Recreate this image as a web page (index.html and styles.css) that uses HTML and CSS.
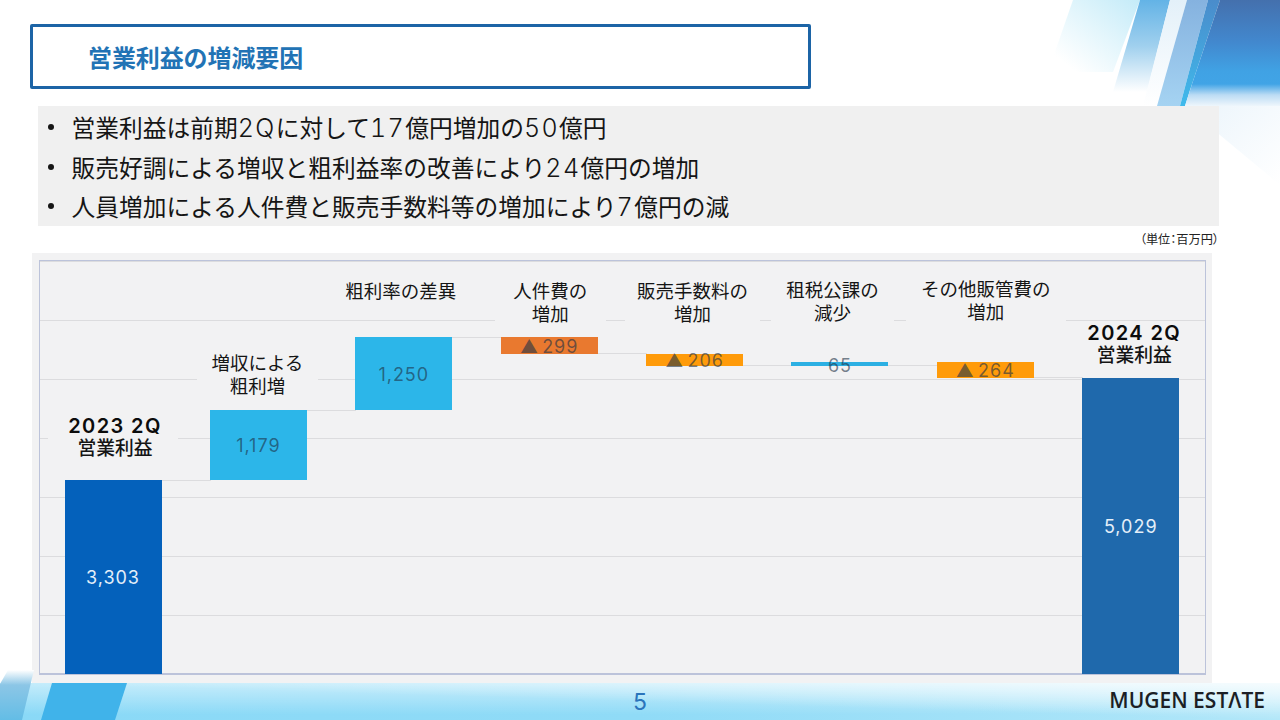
FILE: index.html
```html
<!DOCTYPE html>
<html lang="ja">
<head>
<meta charset="utf-8">
<title>営業利益の増減要因</title>
<link rel="stylesheet" href="styles.css">
</head>
<body>
<div class="slide">
  <svg class="decor-top" viewBox="0 0 260 200" width="260" height="200" aria-hidden="true">
    <defs>
      <linearGradient id="fadeLight" x1="1" y1="0" x2="0" y2="1">
        <stop offset="0" stop-color="#c4ebf8"/><stop offset="0.45" stop-color="#e4f6fc"/><stop offset="0.85" stop-color="#ffffff"/>
      </linearGradient>
      <linearGradient id="fadeBlue" x1="0" y1="0" x2="0" y2="1">
        <stop offset="0" stop-color="#63b3e6"/><stop offset="0.5" stop-color="#a0d0ee"/><stop offset="1" stop-color="#ffffff"/>
      </linearGradient>
      <linearGradient id="fadePale" x1="0" y1="0" x2="0" y2="1">
        <stop offset="0" stop-color="#e3f0f9"/><stop offset="1" stop-color="#ffffff"/>
      </linearGradient>
      <linearGradient id="stripe" x1="0" y1="0" x2="0" y2="1">
        <stop offset="0" stop-color="#85b2df"/><stop offset="1" stop-color="#a5d3f2"/>
      </linearGradient>
      <linearGradient id="stripeDark" x1="0" y1="0" x2="0" y2="1">
        <stop offset="0" stop-color="#4a8ccb"/><stop offset="1" stop-color="#3fbaec"/>
      </linearGradient>
      <linearGradient id="block" x1="0" y1="0" x2="0" y2="1">
        <stop offset="0" stop-color="#4470ad"/><stop offset="0.5" stop-color="#4288ce"/><stop offset="0.85" stop-color="#40a2e4"/><stop offset="1" stop-color="#41a4e6"/>
      </linearGradient>
      <linearGradient id="blockFade" x1="0" y1="0" x2="0" y2="1">
        <stop offset="0" stop-color="#41a4e6"/><stop offset="0.5" stop-color="#bcdcf4"/><stop offset="1" stop-color="#eef6fc"/>
      </linearGradient>
      <linearGradient id="glow" x1="0" y1="0" x2="1" y2="1">
        <stop offset="0" stop-color="#eaf4fb"/><stop offset="1" stop-color="#ffffff"/>
      </linearGradient>
    </defs>
    <polygon points="53,0 120,0 93,72 28,72" fill="url(#fadeLight)"/>
    <polygon points="120,0 150,0 127,92 93,92" fill="url(#fadeBlue)"/>
    <polygon points="150,0 167,0 137,106 123,106" fill="url(#fadePale)"/>
    <polygon points="167,0 188,0 160,106 137,106" fill="url(#stripe)"/>
    <polygon points="188,0 200,0 170,90 165,106 160,106" fill="url(#stripeDark)"/>
    <polygon points="165,106 260,100 260,185" fill="url(#glow)"/>
    <polygon points="200,0 260,0 260,84 172,84" fill="url(#block)"/>
    <polygon points="172,84 260,84 260,106 165,106" fill="url(#blockFade)"/>
  </svg>
  <svg class="decor-bottom" viewBox="0 0 140 50" width="140" height="50" aria-hidden="true">
    <defs>
      <linearGradient id="cornerFade" x1="0" y1="0" x2="0" y2="1">
        <stop offset="0" stop-color="#ffffff"/><stop offset="0.3" stop-color="#8cc6e6"/><stop offset="1" stop-color="#63bde6"/>
      </linearGradient>
    </defs>
    <polygon points="8,0 34,0 22,50 0,50 0,14" fill="url(#cornerFade)"/>
    <polygon points="52,13 127,13 115,50 41,50" fill="#40b3ea"/>
  </svg>

  <header class="title-box"><h1 class="title">営業利益の増減要因</h1></header>

  <ul class="points">
    <li>営業利益は前期<span class="num">2Q</span>に対して<span class="num">17</span>億円増加の<span class="num">50</span>億円</li>
    <li>販売好調による増収と粗利益率の改善により<span class="num">24</span>億円の増加</li>
    <li>人員増加による人件費と販売手数料等の増加により<span class="num">7</span>億円の減</li>
  </ul>

  <p class="unit">（単位：百万円）</p>

  <section class="panel">
    <div class="plot">
      <div class="col c1">
        <div class="label strong"><b class="year">2023 2Q</b><br>営業利益</div>
        <div class="bar conn-top"><span class="val light">3,303</span></div>
      </div>
      <div class="col c2">
        <div class="label">増収による<br>粗利増</div>
        <div class="bar conn-top"><span class="val">1,179</span></div>
      </div>
      <div class="col c3">
        <div class="label">粗利率の差異</div>
        <div class="bar conn-top"><span class="val">1,250</span></div>
      </div>
      <div class="col c4">
        <div class="label">人件費の<br>増加</div>
        <div class="bar conn-bottom"><span class="val">▲ 299</span></div>
      </div>
      <div class="col c5">
        <div class="label">販売手数料の<br>増加</div>
        <div class="bar conn-bottom"><span class="val">▲ 206</span></div>
      </div>
      <div class="col c6">
        <div class="label">租税公課の<br>減少</div>
        <div class="bar conn-bottom"><span class="val">65</span></div>
      </div>
      <div class="col c7">
        <div class="label">その他販管費の<br>増加</div>
        <div class="bar conn-bottom"><span class="val">▲ 264</span></div>
      </div>
      <div class="col c8">
        <div class="label strong"><b class="year">2024 2Q</b><br>営業利益</div>
        <div class="bar"><span class="val light">5,029</span></div>
      </div>
    </div>
  </section>

  <footer class="footer">
    <span></span>
    <span class="page">5</span>
    <span class="logo">MUGEN ESTΛTE</span>
  </footer>
</div>
</body>
</html>
```

FILE: styles.css
```css
* { box-sizing: border-box; }
html, body { margin: 0; padding: 0; }
body {
  width: 1280px;
  height: 720px;
  overflow: hidden;
  background: #fff;
  font-family: "Noto Sans CJK JP", "Noto Sans", sans-serif;
  color: #111;
}
.slide {
  position: relative;
  width: 1280px;
  height: 720px;
  display: flex;
  flex-direction: column;
  overflow: hidden;
}
.decor-top { position: absolute; top: 0; right: 0; }
.decor-bottom { position: absolute; left: 0; bottom: 0; z-index: 2; }

.title-box {
  position: relative;
  margin: 24px 0 0 30px;
  width: 781px;
  height: 65px;
  border: 3px solid #1c64a6;
  border-radius: 2px;
  background: #fff;
  display: flex;
  align-items: center;
  padding-left: 55px;
}
.title {
  margin: 0;
  font-size: 24px;
  font-weight: 700;
  letter-spacing: -0.1px;
  line-height: 1;
  color: #2273b5;
}

.points {
  position: relative;
  list-style: none;
  margin: 17px 0 0 38px;
  padding: 1px 0 0 33.5px;
  width: 1181px;
  height: 120px;
  background: #f0f0f0;
  font-size: 23.75px;
  line-height: 39.5px;
  color: #151515;
}
.points li { position: relative; white-space: nowrap; }
.points li::before {
  content: "";
  position: absolute;
  left: -24px;
  top: 17px;
  width: 6px;
  height: 6px;
  border-radius: 50%;
  background: #151515;
}
.num {
  font-family: "Inter", "Noto Sans", sans-serif;
  font-weight: 300;
  font-size: 25px;
  font-feature-settings: "tnum";
  letter-spacing: 1.4px;
  line-height: 1;
}

.unit {
  position: relative;
  margin: 0;
  width: 1219px;
  height: 27px;
  padding-top: 4px;
  text-align: right;
  font-size: 12.2px;
  font-feature-settings: "palt";
  line-height: 18px;
  color: #222;
}

.panel {
  position: relative;
  z-index: 1;
  margin-left: 32px;
  width: 1180px;
  height: 430px;
  padding: 7px 6px 8px 7px;
  background: #f2f2f3;
}
.plot {
  height: 415px;
  border: 1px solid #bcc3da;
  border-bottom-width: 2px;
  padding-left: 24.5px;
  display: grid;
  grid-template-columns: repeat(8, 97px);
  column-gap: 48.4px;
  background-image: linear-gradient(to bottom, transparent 58px, #dcdcde 58px);
  background-size: 100% 59px;
  background-position: 0 1px;
}

.col { position: relative; }
.bar {
  position: relative;
  margin-top: var(--bar-top);
  height: var(--bar-h);
  background: var(--bar-bg);
  display: flex;
  align-items: center;
  justify-content: center;
}
.conn-top::after, .conn-bottom::after {
  content: "";
  position: absolute;
  left: 100%;
  width: 49px;
  height: 1px;
  background: #dcdcde;
}
.conn-top::after { top: 0; }
.conn-bottom::after { bottom: 0; }

.val {
  font-family: "Inter", "Noto Sans CJK JP", sans-serif;
  font-size: 18px;
  letter-spacing: 1px;
  word-spacing: -3px;
  line-height: 1;
  white-space: nowrap;
  color: rgba(30, 50, 70, 0.62);
  position: relative;
  top: 1px;
}
.val.light { color: #e4eff9; }

.label {
  position: absolute;
  top: var(--label-top);
  left: var(--label-left);
  width: var(--label-w);
  padding: var(--label-pad) 0;
  padding-left: var(--label-indent, 0);
  text-align: center;
  background: #f2f2f3;
  font-size: 18.5px;
  line-height: 23px;
  white-space: nowrap;
  color: #151515;
  z-index: 1;
}
.label.strong { font-size: 18.8px; font-weight: 500; line-height: 22px; }
.year {
  font-family: "Inter", "Noto Sans", sans-serif;
  font-weight: 600;
  font-size: 20px;
  letter-spacing: 1.4px;
  line-height: 1;
  color: #0c0c0c;
}

.c1 { --bar-top: 219px; --bar-h: 194px; --bar-bg: #0461bb; --label-top: 151px; --label-left: -17px; --label-w: 130px; --label-pad: 2px; --label-indent: 5px; }
.c2 { --bar-top: 149px; --bar-h: 70px; --bar-bg: #2cb6e9; --label-top: 90px; --label-left: -13px; --label-w: 121px; --label-pad: 0; }
.c3 { --bar-top: 76px; --bar-h: 73px; --bar-bg: #2cb6e9; --label-top: 18px; --label-left: -14px; --label-w: 119px; --label-pad: 0; }
.c4 { --bar-top: 76px; --bar-h: 17px; --bar-bg: #e9792f; --label-top: 18px; --label-left: -6px; --label-w: 111px; --label-pad: 0; }
.c5 { --bar-top: 93px; --bar-h: 12px; --bar-bg: #ff9b0a; --label-top: 18px; --label-left: -21px; --label-w: 135px; --label-pad: 0; }
.c6 { --bar-top: 101px; --bar-h: 4px; --bar-bg: #2cb0e3; --label-top: 17px; --label-left: -20.5px; --label-w: 123px; --label-pad: 0; }
.c7 { --bar-top: 101px; --bar-h: 16px; --bar-bg: #ff9b0a; --label-top: 16px; --label-left: -31px; --label-w: 160px; --label-pad: 0; }
.c8 { --bar-top: 117px; --bar-h: 296px; --bar-bg: #1f69ac; --label-top: 60px; --label-left: -18px; --label-w: 125px; --label-pad: 0; --label-indent: 15px; }
.c6 .val { top: 2px; }

.footer {
  position: relative;
  flex: 1;
  display: grid;
  grid-template-columns: 1fr auto 1fr;
  align-items: center;
  padding: 0 15px;
  background:
    linear-gradient(to bottom left, rgba(255,255,255,0.75), rgba(255,255,255,0) 50%),
    linear-gradient(to bottom, rgba(255,255,255,0.5), rgba(255,255,255,0) 85%),
    linear-gradient(to right, #8ad9f7 0%, #90dbf7 50%, #b2e7f9 100%);
}
.page {
  font-family: "Inter", "Noto Sans", sans-serif;
  font-size: 23px;
  line-height: 1;
  color: #2a74bb;
  position: relative;
  top: 1px;
}
.logo {
  justify-self: end;
  font-family: "Open Sans", "Noto Sans", sans-serif;
  font-size: 21px;
  font-weight: 600;
  line-height: 1;
  color: #1c1f26;
  position: relative;
  top: -1px;
}
```
